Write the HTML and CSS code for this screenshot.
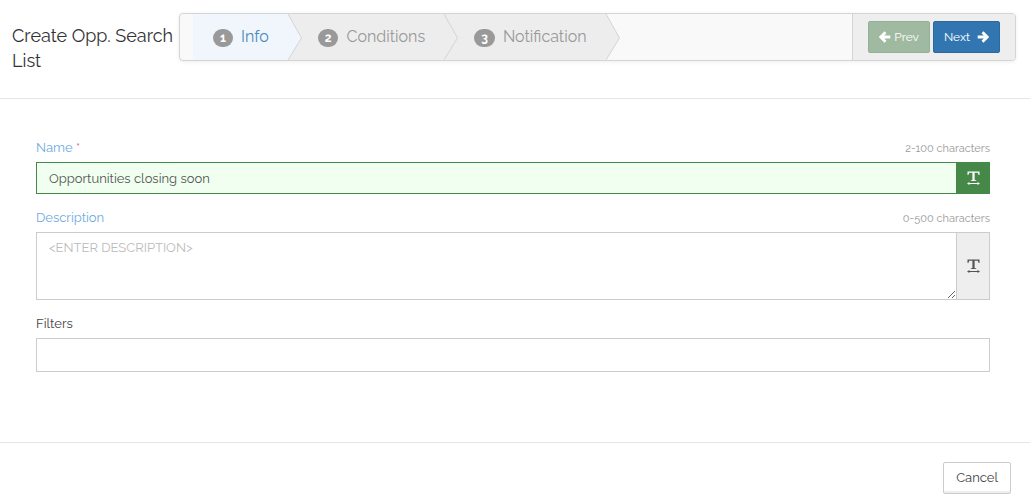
FILE: index.html
```
<!DOCTYPE html>
<html lang="en">
<head>
  <meta charset="UTF-8">
  <meta name="viewport" content="width=device-width, initial-scale=1">
  <title>Create Opp. Search List</title>
  <link rel="stylesheet" href="styles.css">
</head>
<body>
  <header class="page-header">
    <h1>Create Opp. Search List</h1>
    <div class="wizard">
      <ol class="steps">
        <li class="step active">
          <span class="badge">1</span>Info
          <svg class="chevron" viewBox="0 0 14 46" preserveAspectRatio="none"><path d="M0 0 L13.5 24 L0 46"/></svg>
        </li>
        <li class="step">
          <span class="badge">2</span>Conditions
          <svg class="chevron" viewBox="0 0 14 46" preserveAspectRatio="none"><path d="M0 0 L13.5 24 L0 46"/></svg>
        </li>
        <li class="step">
          <span class="badge">3</span>Notification
          <svg class="chevron" viewBox="0 0 14 46" preserveAspectRatio="none"><path d="M0 0 L13.5 24 L0 46"/></svg>
        </li>
      </ol>
      <div class="actions">
        <button type="button" class="btn btn-prev" disabled>
          <svg class="arrow" viewBox="0 0 12 12"><path d="M6.5 1.3 L1.8 6 L6.5 10.7 M2.2 6 H11.3"/></svg>
          Prev
        </button>
        <button type="button" class="btn btn-next">
          Next
          <svg class="arrow" viewBox="0 0 12 12"><path d="M5.5 1.3 L10.2 6 L5.5 10.7 M9.8 6 H0.7"/></svg>
        </button>
      </div>
    </div>
  </header>

  <form class="form" id="search-form">
    <div class="field">
      <div class="field-head">
        <label for="name">Name <span class="required">*</span></label>
        <span class="hint">2-100 characters</span>
      </div>
      <div class="input-group valid">
        <input type="text" id="name" value="Opportunities closing soon">
        <span class="addon">
          <svg class="text-width" viewBox="0 0 13 14"><path d="M0.5 0.5 H12.5 V4 H11.6 L10.8 1.7 H7.6 V9 L9.3 9.4 V10 H3.7 V9.4 L5.4 9 V1.7 H2.2 L1.4 4 H0.5 Z M0 12.5 L2.5 11 V12 H10.5 V11 L13 12.5 L10.5 14 V13 H2.5 V14 Z"/></svg>
        </span>
      </div>
    </div>

    <div class="field">
      <div class="field-head">
        <label for="description">Description</label>
        <span class="hint">0-500 characters</span>
      </div>
      <div class="input-group">
        <textarea id="description" placeholder="&lt;ENTER DESCRIPTION&gt;"></textarea>
        <span class="addon">
          <svg class="text-width" viewBox="0 0 13 14"><path d="M0.5 0.5 H12.5 V4 H11.6 L10.8 1.7 H7.6 V9 L9.3 9.4 V10 H3.7 V9.4 L5.4 9 V1.7 H2.2 L1.4 4 H0.5 Z M0 12.5 L2.5 11 V12 H10.5 V11 L13 12.5 L10.5 14 V13 H2.5 V14 Z"/></svg>
        </span>
      </div>
    </div>

    <div class="field">
      <div class="field-head">
        <label class="plain" for="filters">Filters</label>
      </div>
      <input type="text" id="filters" class="filters">
    </div>
  </form>

  <footer class="page-footer">
    <button type="button" class="btn btn-cancel">Cancel</button>
  </footer>
</body>
</html>
```

FILE: styles.css
```
* {
  box-sizing: border-box;
}
body {
  margin: 0;
  background: #fff;
  color: #555;
  font-family: Raleway, Lato, "Open Sans", sans-serif;
  font-size: 13px;
  line-height: 20px;
}

/* header */
.page-header {
  display: flex;
  align-items: flex-start;
  padding: 13px 14px 25px 12px;
  border-bottom: 1px solid #e5e5e5;
}
h1 {
  flex: 0 0 167px;
  margin: 0;
  padding-top: 10px;
  color: #333;
  font-size: 18px;
  font-weight: 400;
  line-height: 25px;
}
.wizard {
  flex: 1;
  display: flex;
  justify-content: space-between;
  min-height: 48px;
  background: #f9f9f9;
  border: 1px solid #d4d4d4;
  border-radius: 4px;
  box-shadow: 0 1px 4px rgba(0, 0, 0, 0.07);
}
.steps {
  display: flex;
  margin: 0;
  padding: 0 0 0 13px;
  list-style: none;
}
.step {
  position: relative;
  display: flex;
  align-items: center;
  gap: 8px;
  padding: 0 19px 0 30px;
  background: #ededed;
  color: #999;
  font-size: 16px;
}
.step.active {
  padding-left: 20px;
  background: #f1f6fc;
  color: #4a8bbd;
}
.badge {
  margin-top: 2px;
  padding: 0 7px;
  border-radius: 9px;
  background: #999;
  color: #fff;
  font-size: 12px;
  font-weight: 700;
  line-height: 18px;
}
.chevron {
  position: absolute;
  z-index: 1;
  top: 0;
  left: 100%;
  width: 14px;
  height: 100%;
  fill: #ededed;
  stroke: #d4d4d4;
}
.step.active .chevron {
  fill: #f1f6fc;
}
.actions {
  display: flex;
  align-items: center;
  gap: 3px;
  padding: 0 15px;
  background: #eee;
  border-left: 1px solid #d4d4d4;
  border-radius: 0 3px 3px 0;
}

/* buttons */
.btn {
  display: flex;
  align-items: center;
  height: 32px;
  padding: 0 10px;
  border: 1px solid #ccc;
  border-radius: 2px;
  font: inherit;
  cursor: pointer;
}
.btn-prev {
  gap: 3px;
  background: #9fbaa0;
  border-color: #94b096;
  color: #fff;
  font-size: 12px;
  cursor: default;
}
.btn-next {
  gap: 7px;
  background: #3276b1;
  border-color: #2c699d;
  color: #fff;
  font-size: 12px;
}
.btn-cancel {
  padding: 0 12px;
  background: #fff;
  box-shadow: inset 0 -2px 0 #eee;
  color: #444;
}
.arrow {
  width: 12px;
  height: 12px;
  fill: none;
  stroke: #fff;
  stroke-width: 2.8;
}

/* form */
.form {
  padding: 39px 40px 70px 36px;
}
.field + .field {
  margin-top: 14px;
}
.field-head {
  display: flex;
  align-items: baseline;
  justify-content: space-between;
  height: 20px;
  margin-bottom: 4px;
}
label {
  color: #6fabe0;
}
label.plain {
  color: #444;
}
.required {
  color: #e0507a;
}
.hint {
  color: #999;
  font-size: 11px;
}
.input-group {
  display: flex;
}
input,
textarea {
  display: block;
  width: 100%;
  height: 32px;
  margin: 0;
  padding: 5px 12px;
  background: #fff;
  border: 1px solid #ccc;
  border-radius: 0;
  color: #555;
  font: inherit;
}
textarea {
  height: 68px;
  resize: vertical;
}
textarea::placeholder {
  color: #bbb;
}
.input-group input,
.input-group textarea {
  flex: 1;
  border-right: 0;
}
.addon {
  display: flex;
  align-items: center;
  justify-content: center;
  width: 34px;
  background: #eee;
  border: 1px solid #ccc;
}
.text-width {
  width: 13px;
  height: 14px;
  fill: #555;
}
.valid input {
  background: #f0fff0;
  border-color: #468847;
}
.valid .addon {
  background: #468847;
  border-color: #468847;
}
.valid .text-width {
  fill: #fff;
}
.filters {
  height: 34px;
}

/* footer */
.page-footer {
  display: flex;
  justify-content: flex-end;
  padding: 19px 19px 8px;
  border-top: 1px solid #e5e5e5;
}
```
